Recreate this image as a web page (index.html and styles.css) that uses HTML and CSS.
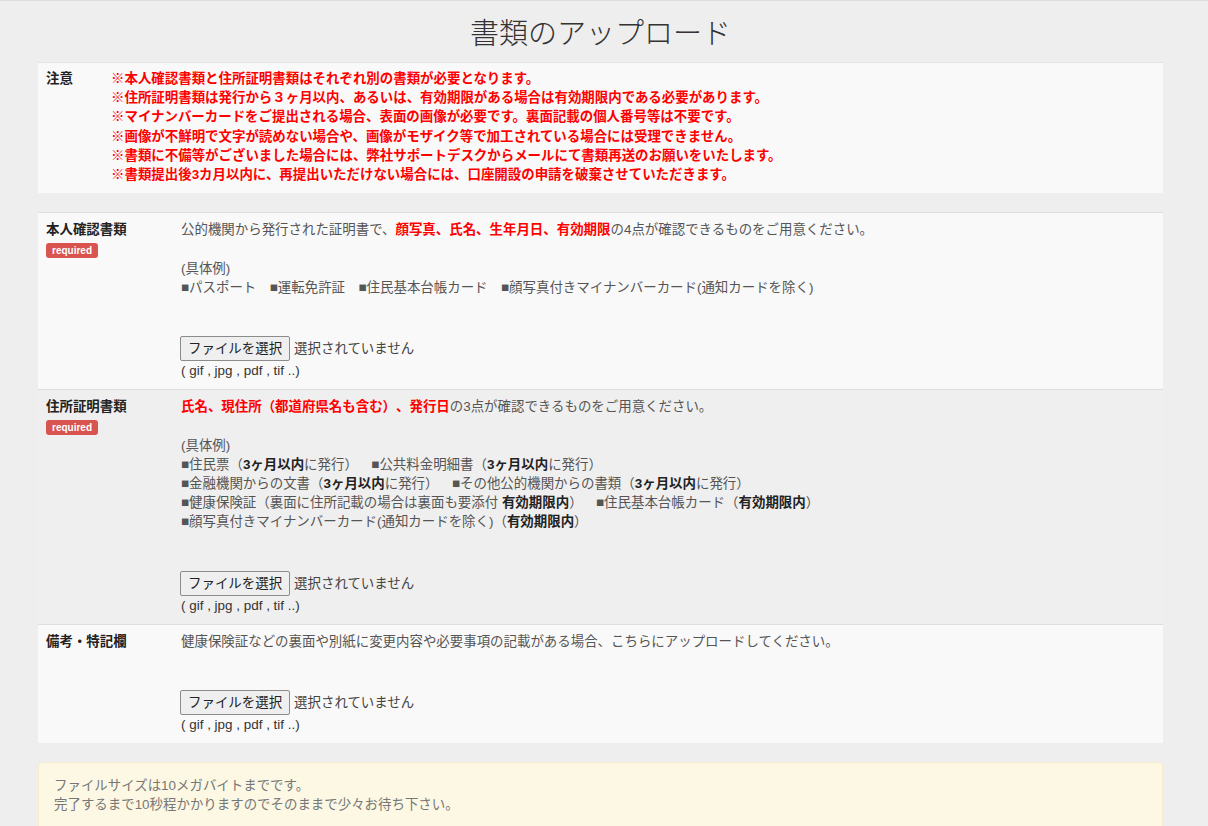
FILE: index.html
```html
<!DOCTYPE html>
<html lang="ja">
<head>
<meta charset="utf-8">
<title>書類のアップロード</title>
<link rel="stylesheet" href="styles.css">
</head>
<body>
<div class="page">
  <h1 class="title">書類のアップロード</h1>

  <div class="notice">
    <div class="notice-label">注意</div>
    <div class="notice-body">
      <div>※本人確認書類と住所証明書類はそれぞれ別の書類が必要となります。</div>
      <div>※住所証明書類は発行から３ヶ月以内、あるいは、有効期限がある場合は有効期限内である必要があります。</div>
      <div>※マイナンバーカードをご提出される場合、表面の画像が必要です。裏面記載の個人番号等は不要です。</div>
      <div>※画像が不鮮明で文字が読めない場合や、画像がモザイク等で加工されている場合には受理できません。</div>
      <div>※書類に不備等がございました場合には、弊社サポートデスクからメールにて書類再送のお願いをいたします。</div>
      <div>※書類提出後3カ月以内に、再提出いただけない場合には、口座開設の申請を破棄させていただきます。</div>
    </div>
  </div>

  <div class="table">
    <div class="row odd">
      <div class="label">
        <div class="label-text">本人確認書類</div>
        <span class="badge">required</span>
      </div>
      <div class="content">
        <div class="desc">公的機関から発行された証明書で、<span class="red">顔写真、氏名、生年月日、有効期限</span>の4点が確認できるものをご用意ください。</div>
        <div class="examples">
          <div>(具体例)</div>
          <div>■パスポート　■運転免許証　■住民基本台帳カード　■顔写真付きマイナンバーカード(通知カードを除く)</div>
        </div>
        <div class="upload">
          <div class="file-line"><span class="file-btn">ファイルを選択</span><span class="file-status">選択されていません</span></div>
          <div class="formats">( gif , jpg , pdf , tif ..)</div>
        </div>
      </div>
    </div>

    <div class="row even">
      <div class="label">
        <div class="label-text">住所証明書類</div>
        <span class="badge">required</span>
      </div>
      <div class="content">
        <div class="desc"><span class="red">氏名、現住所（都道府県名も含む）、発行日</span>の3点が確認できるものをご用意ください。</div>
        <div class="examples">
          <div>(具体例)</div>
          <div>■住民票（<b>3ヶ月以内</b>に発行）　■公共料金明細書（<b>3ヶ月以内</b>に発行）</div>
          <div>■金融機関からの文書（<b>3ヶ月以内</b>に発行）　■その他公的機関からの書類（<b>3ヶ月以内</b>に発行）</div>
          <div>■健康保険証（裏面に住所記載の場合は裏面も要添付 <b>有効期限内</b>）　■住民基本台帳カード（<b>有効期限内</b>）</div>
          <div>■顔写真付きマイナンバーカード(通知カードを除く)（<b>有効期限内</b>）</div>
        </div>
        <div class="upload">
          <div class="file-line"><span class="file-btn">ファイルを選択</span><span class="file-status">選択されていません</span></div>
          <div class="formats">( gif , jpg , pdf , tif ..)</div>
        </div>
      </div>
    </div>

    <div class="row odd">
      <div class="label">
        <div class="label-text">備考・特記欄</div>
      </div>
      <div class="content">
        <div class="desc">健康保険証などの裏面や別紙に変更内容や必要事項の記載がある場合、こちらにアップロードしてください。</div>
        <div class="upload">
          <div class="file-line"><span class="file-btn">ファイルを選択</span><span class="file-status">選択されていません</span></div>
          <div class="formats">( gif , jpg , pdf , tif ..)</div>
        </div>
      </div>
    </div>
  </div>

  <div class="alert">
    <div>ファイルサイズは10メガバイトまでです。</div>
    <div>完了するまで10秒程かかりますのでそのままで少々お待ち下さい。</div>
  </div>
</div>
</body>
</html>
```

FILE: styles.css
```css
html, body {
  margin: 0;
  padding: 0;
}

body {
  background: #eeeeee;
  border-top: 1px solid #dcdcdc;
  font-family: "Liberation Sans", "Noto Sans CJK JP", sans-serif;
  font-size: 13.45px;
  line-height: 19.2px;
  color: #555;
  text-spacing-trim: space-all;
}

.page {
  width: 1125px;
  margin-left: 38px;
}

.title {
  margin: 0;
  padding-top: 13px;
  height: 40px;
  line-height: 40px;
  margin-bottom: 8px;
  text-align: center;
  font-size: 29px;
  font-weight: 300;
  color: #333;
}

.notice {
  display: flex;
  background: #f9f9f9;
  border-top: 1px solid #e4e4e4;
  padding: 6px 0 9px;
}

.notice-label {
  width: 57px;
  padding-left: 8px;
  font-weight: bold;
  color: #222;
}

.notice-body {
  padding-left: 8px;
  color: #ff0000;
  font-weight: bold;
}

.table {
  margin-top: 19px;
}

.row {
  display: grid;
  grid-template-columns: 135px 1fr;
  border-top: 1px solid #dddddd;
}

.row.odd {
  background: #f9f9f9;
}

.row.even {
  background: #efefef;
}

.label {
  padding: 7px 8px 9px;
}

.label-text {
  font-weight: bold;
  color: #222;
}

.badge {
  display: inline-block;
  margin-top: 4px;
  height: 15px;
  line-height: 15px;
  padding: 0 6px;
  background: #d9534f;
  color: #fff;
  font-size: 10px;
  font-weight: bold;
  border-radius: 3px;
  vertical-align: top;
}

.content {
  padding: 7px 8px 9px;
}

.red {
  color: #ff0000;
  font-weight: bold;
}

.content b {
  color: #222;
}

.examples {
  margin-top: 19.2px;
}

.upload {
  margin-top: 39px;
}

.file-line {
  display: flex;
  align-items: center;
  height: 25px;
}

.file-btn {
  box-sizing: border-box;
  height: 25px;
  line-height: 23px;
  padding: 0 7px;
  background: #efefef;
  border: 1px solid #8c8c8c;
  border-radius: 2px;
  color: #222;
  margin-left: -1px;
}

.file-status {
  margin-left: 4px;
  color: #444;
}

.formats {
  color: #333;
}

.alert {
  margin-top: 19px;
  background: #fcf8e3;
  border: 1px solid #f6ebcc;
  border-radius: 4px;
  padding: 13px 15px 15px;
  color: #777;
}
```
